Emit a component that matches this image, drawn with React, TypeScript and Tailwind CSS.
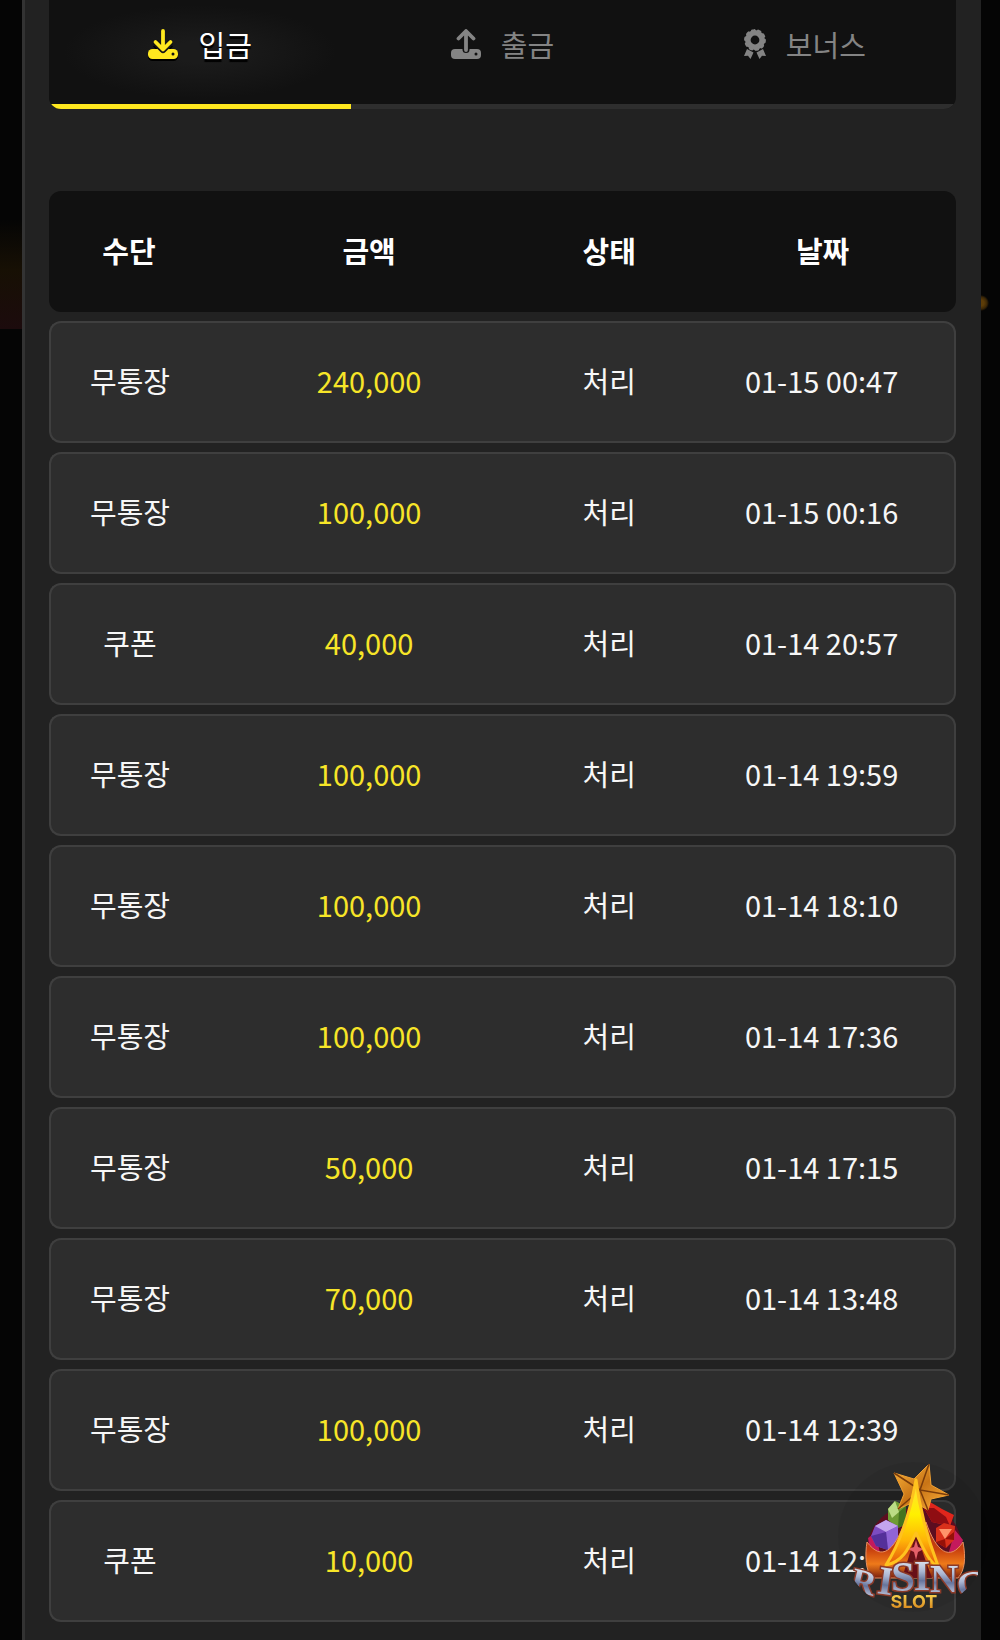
import type { ReactNode } from 'react';

interface HistoryItem {
  method: string;
  amount: string;
  status: string;
  date: string;
}

const history: HistoryItem[] = [
  { method: '무통장', amount: '240,000', status: '처리', date: '01-15 00:47' },
  { method: '무통장', amount: '100,000', status: '처리', date: '01-15 00:16' },
  { method: '쿠폰', amount: '40,000', status: '처리', date: '01-14 20:57' },
  { method: '무통장', amount: '100,000', status: '처리', date: '01-14 19:59' },
  { method: '무통장', amount: '100,000', status: '처리', date: '01-14 18:10' },
  { method: '무통장', amount: '100,000', status: '처리', date: '01-14 17:36' },
  { method: '무통장', amount: '50,000', status: '처리', date: '01-14 17:15' },
  { method: '무통장', amount: '70,000', status: '처리', date: '01-14 13:48' },
  { method: '무통장', amount: '100,000', status: '처리', date: '01-14 12:39' },
  { method: '쿠폰', amount: '10,000', status: '처리', date: '01-14 12:25' },
];

function DepositIcon() {
  return (
    <svg viewBox="0 0 30 30" className="h-[30px] w-[30px] drop-shadow-[0_2px_0_#000]">
      <rect x="0" y="20" width="30" height="10" rx="4.5" fill="currentColor" />
      <path d="M7.5 13L15 20.5L22.5 13" fill="none" stroke="#151515" strokeWidth="7" strokeLinejoin="round" />
      <path d="M15 2V20M7.5 13L15 20.5L22.5 13" fill="none" stroke="currentColor" strokeWidth="3.8" strokeLinecap="round" strokeLinejoin="round" />
      <circle cx="25" cy="25" r="1.5" fill="#111" />
    </svg>
  );
}

function WithdrawIcon() {
  return (
    <svg viewBox="0 0 30 30" className="h-[30px] w-[30px]">
      <rect x="0" y="20" width="30" height="10" rx="4" fill="currentColor" />
      <path d="M15 14V20.5" fill="none" stroke="#111" strokeWidth="7" strokeLinecap="round" />
      <path d="M15 2.5V21M7.5 9.5L15 2L22.5 9.5" fill="none" stroke="currentColor" strokeWidth="3.8" strokeLinecap="round" strokeLinejoin="round" />
      <circle cx="25" cy="25" r="1.5" fill="#111" />
    </svg>
  );
}

function BonusIcon() {
  return (
    <svg viewBox="0 0 22 30" className="h-[30px] w-[22px]" fill="currentColor">
      <path d="M3 20L0 27L4 26.8L6.5 30L9.5 23.5Z M19 20L22 27L18 26.8L15.5 30L12.5 23.5Z" />
      <circle cx="11" cy="11" r="7.2" fill="none" stroke="currentColor" strokeWidth="5.6" />
      <circle cx="11" cy="11" r="9.6" fill="none" stroke="currentColor" strokeWidth="2.6" strokeLinecap="round" strokeDasharray="2 4.03" />
    </svg>
  );
}

function Tab({ icon, label, active }: { icon: ReactNode; label: string; active?: boolean }) {
  return (
    <button
      role="tab"
      aria-selected={!!active}
      className={`flex h-[109px] flex-1 items-center justify-center gap-5 border-b-5 pb-4 text-[29px] leading-[42px] ${
        active
          ? 'border-[#ffe81f] bg-[radial-gradient(closest-side,#1b1b1b_20%,#111_90%)] text-white [text-shadow:0_3px_1px_#000]'
          : 'border-[#2e2e2e] text-[#848484]'
      }`}
    >
      <span className={active ? 'text-[#ffe81f]' : ''}>{icon}</span>
      {label}
    </button>
  );
}

function HistoryTable() {
  return (
    <table className="mt-[73px] w-full table-fixed border-separate border-spacing-x-0 border-spacing-y-[9px] text-center text-[29px] leading-[42px]">
      <colgroup>
        <col className="w-3/17" />
        <col className="w-6/17" />
        <col className="w-3/17" />
        <col className="w-5/17" />
      </colgroup>
      <thead>
        <tr className="h-[121px] text-white">
          <th className="rounded-l-xl bg-[#111] pb-1 font-bold">수단</th>
          <th className="bg-[#111] pb-1 font-bold">금액</th>
          <th className="bg-[#111] pb-1 font-bold">상태</th>
          <th className="rounded-r-xl bg-[#111] pb-1 font-bold">날짜</th>
        </tr>
      </thead>
      <tbody>
        {history.map((item) => (
          <tr key={item.date} className="h-[122px] text-[#f7f7f7]">
            <td className="rounded-l-xl border-y-2 border-l-2 border-[#3f3f3f] bg-[#2d2d2d] pb-1">{item.method}</td>
            <td className="border-y-2 border-[#3f3f3f] bg-[#2d2d2d] pb-1 text-[#f7e528]">{item.amount}</td>
            <td className="border-y-2 border-[#3f3f3f] bg-[#2d2d2d] pb-1">{item.status}</td>
            <td className="rounded-r-xl border-y-2 border-r-2 border-[#3f3f3f] bg-[#2d2d2d] pb-1">{item.date}</td>
          </tr>
        ))}
      </tbody>
    </table>
  );
}

function RisingSlotLogo() {
  return (
    <svg viewBox="0 0 130 150" className="h-[150px] w-[130px]" role="img" aria-label="Rising Slot">
      <defs>
        <linearGradient id="gold" x1="0" y1="0" x2="1" y2="1">
          <stop offset="0" stopColor="#ffb83c" />
          <stop offset="0.5" stopColor="#c87416" />
          <stop offset="1" stopColor="#ffb33c" />
        </linearGradient>
        <linearGradient id="flame" x1="0" y1="0" x2="0" y2="1">
          <stop offset="0" stopColor="#ffdc3c" />
          <stop offset="0.4" stopColor="#fff000" />
          <stop offset="0.7" stopColor="#ffb508" />
          <stop offset="1" stopColor="#e4500c" />
        </linearGradient>
        <linearGradient id="bowl" x1="0" y1="0" x2="0" y2="1">
          <stop offset="0" stopColor="#a82a18" />
          <stop offset="0.5" stopColor="#c9420e" />
          <stop offset="0.75" stopColor="#ee7a1a" />
          <stop offset="1" stopColor="#7c200c" />
        </linearGradient>
        <linearGradient id="steel" x1="0" y1="0" x2="0" y2="1">
          <stop offset="0" stopColor="#ffffff" />
          <stop offset="0.4" stopColor="#aab6d2" />
          <stop offset="0.6" stopColor="#66749c" />
          <stop offset="1" stopColor="#f2f4ff" />
        </linearGradient>
        <linearGradient id="slot" x1="0" y1="0" x2="0" y2="1">
          <stop offset="0" stopColor="#ffe25a" />
          <stop offset="1" stopColor="#d27a14" />
        </linearGradient>
        <clipPath id="round">
          <circle cx="66" cy="75" r="74" />
        </clipPath>
      </defs>

      {/* jewels heaped behind the flame */}
      <path d="M20 98C16 78 24 60 44 48L88 44C106 54 118 74 113 98L68 112Z" fill="#5c0d20" />
      <path d="M28 70L20 76L22 88L32 92Z M107 68L115 78L110 92L101 90Z" fill="#c41a5c" />
      <path d="M40 47L47 39L58 44L58 62L50 66L40 58Z" fill="#6f9c35" />
      <path d="M40 47L47 39L51 50L44 56Z" fill="#bcdc86" />
      <path d="M51 50L58 44L58 62L50 66Z" fill="#44741f" />
      <path d="M27 64L38 58L50 64L50 78L40 88L28 84L23 74Z" fill="#7c4cc0" />
      <path d="M27 64L38 58L50 64L38 70Z" fill="#c4a4ee" />
      <path d="M38 70L50 64L50 78L40 88Z" fill="#9064d6" />
      <path d="M38 70L23 74L28 84L40 88Z" fill="#54309a" />
      <path d="M76 46L82 40L94 47L106 53L102 64L84 60Z" fill="#e0261c" />
      <path d="M76 46L86 46L98 55L102 64L84 60Z" fill="#8f0d12" />
      <path d="M88 66L96 61L107 64L106 78L98 86L88 80Z" fill="#d9301a" />
      <path d="M91 67L104 67L97 77Z" fill="#ff946a" />
      <path d="M88 80L97 77L98 86Z M97 77L106 70L106 78Z" fill="#951108" />

      {/* bowl */}
      <path d="M19 80C34 100 46 88 56 62L68 74L78 60C88 90 102 100 115 80C118 96 117 108 110 116H25C17 110 17 92 19 80Z" fill="url(#bowl)" stroke="#e89060" strokeWidth="1" />
      <path d="M54 116L68 72L84 116Z" fill="#681018" />
      <path d="M68 78L70 85L76 87L70 90L68 98L66 90L60 87L66 85Z" fill="#e4606a" />

      {/* star and flame */}
      <path d="M81 2L83 23L101 33L83 37L80 48L66 40L50 47L56 32L46 11L66 17Z" fill="url(#gold)" stroke="#f0a032" strokeWidth="1" />
      <path d="M81 2L72 28L101 33M72 28L46 11M72 28L80 48M72 28L50 47" fill="none" stroke="#7a3c0a" strokeWidth="1.5" />
      <path d="M68 18C71 42 78 72 90 104C82 102 75 86 68 71C60 88 54 100 38 103C54 78 62 50 68 18Z" fill="url(#flame)" stroke="#ffc21e" strokeWidth="3" strokeLinejoin="round" />

      {/* lettering */}
      <g clipPath="url(#round)" fontFamily="'Liberation Serif', serif" fontWeight="700" fill="url(#steel)" stroke="#8b3a28" strokeWidth="3" paintOrder="stroke" textAnchor="middle">
        <text x="13" y="131" fontSize="34" transform="rotate(14 13 131)">R</text>
        <text x="36" y="132" fontSize="40" transform="rotate(8 36 132)">I</text>
        <text x="55" y="129" fontSize="43">S</text>
        <text x="74" y="128" fontSize="42">I</text>
        <text x="96" y="130" fontSize="39">N</text>
        <text x="125" y="134" fontSize="36" transform="rotate(-10 125 134)">G</text>
      </g>
      <text x="66" y="146" textAnchor="middle" fontFamily="Inter, sans-serif" fontWeight="700" fontSize="18" fill="url(#slot)">SLOT</text>
    </svg>
  );
}

export default function App() {
  return (
    <div className="min-h-screen overflow-hidden bg-[#050505] bg-[linear-gradient(#050505_220px,#171004_270px,#1c0b0d_329px,#050505_329px),radial-gradient(circle_at_calc(100%_-_19px)_303px,#5c3c08_3px,#3a2606_6px,transparent_8px)] bg-no-repeat [background-size:22px_100%,100%_100%] pr-[19px] pl-[22px] font-['Noto_Sans_CJK_KR',sans-serif]">
      <main className="min-h-screen border-l-3 border-[#333] bg-[#222] pr-[25px] pb-2.5 pl-6">
        <div role="tablist" className="flex overflow-hidden rounded-b-xl bg-[#111]">
          <Tab icon={<DepositIcon />} label="입금" active />
          <Tab icon={<WithdrawIcon />} label="출금" />
          <Tab icon={<BonusIcon />} label="보너스" />
        </div>
        <HistoryTable />
      </main>

      <a href="#slot" className="fixed right-3 bottom-7 flex h-[150px] w-[150px] items-center justify-center rounded-full bg-black/5">
        <RisingSlotLogo />
      </a>
    </div>
  );
}
